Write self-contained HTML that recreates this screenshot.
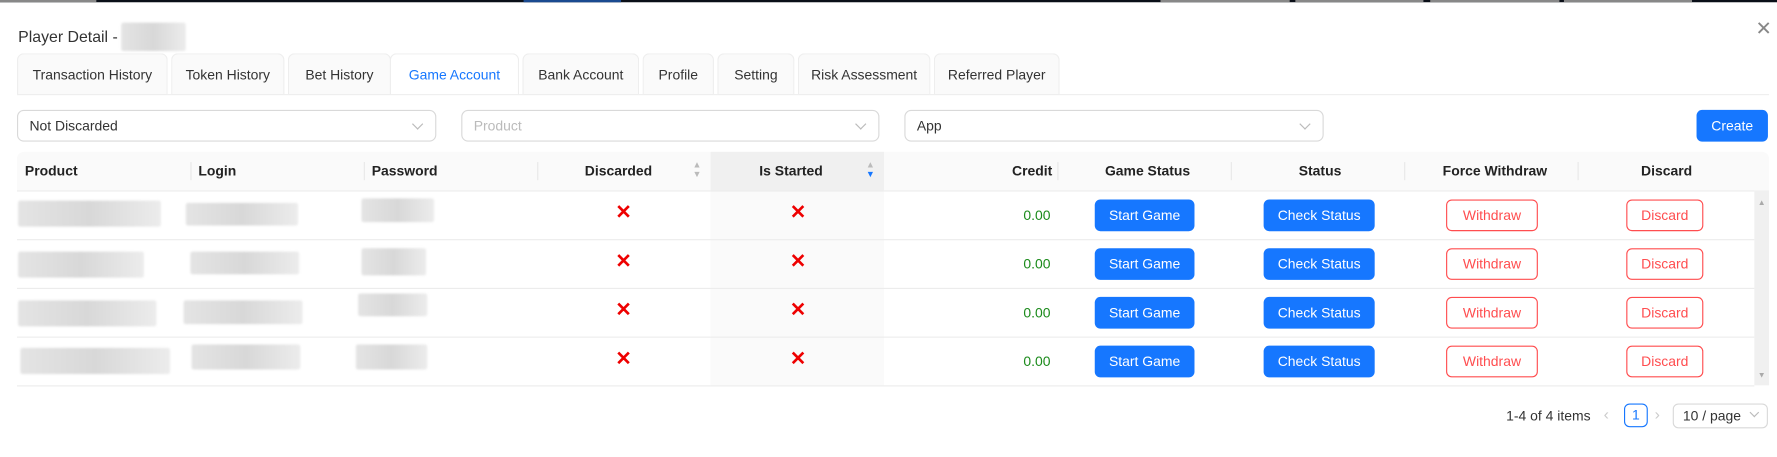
<!DOCTYPE html>
<html><head><style>
*{box-sizing:border-box;margin:0;padding:0}
html,body{width:1777px;height:457px;overflow:hidden;background:#fff}
#w{width:1568px;height:403px;position:relative;transform:scale(1.13329);transform-origin:0 0;font-family:"Liberation Sans",sans-serif;font-size:12.3px;color:#222}
.abs{position:absolute}
.tab{position:absolute;top:47px;height:36px;border:1px solid #eee;border-bottom:none;border-radius:6px 6px 0 0;background:#fafafa;line-height:36px;text-align:center;color:#333}
.tab.act{background:#fff;color:#1677ff;height:37px}
.sel{position:absolute;top:97px;height:28px;border:1px solid #d9d9d9;border-radius:6px;padding-left:10px;line-height:26px;color:#333}
.sel:after{content:"";position:absolute;right:12px;top:8px;width:6px;height:6px;border-right:1px solid #bbb;border-bottom:1px solid #bbb;transform:rotate(45deg)}
.th{position:absolute;top:134px;height:34px;line-height:34px;font-weight:bold;color:#222;font-size:12.3px}
.sep{position:absolute;top:143px;width:1px;height:16px;background:#e8e8e8}
.hl{position:absolute;left:15px;width:1533px;height:1px;background:#ececec}
.x{position:absolute;color:#e00;font-weight:bold;font-size:17px}
.cr{position:absolute;left:880px;width:47px;text-align:right;color:#1a8a1a}
.bp{position:absolute;height:28px;background:#1677ff;color:#fff;border-radius:5px;text-align:center;line-height:28px}
.bd{position:absolute;height:28px;border:1px solid #ff4d4f;color:#ff4d4f;border-radius:5px;text-align:center;line-height:26px;background:#fff}
.blur{position:absolute;background:linear-gradient(90deg,#e4e4e4,#d8d8d8,#ececec);border-radius:2px;filter:blur(1px)}
</style></head><body><div id="w">
<div class="abs" style="left:0;top:0;width:1568px;height:2px;background:#0a0f18"></div>
<div class="abs" style="left:0;top:0;width:85px;height:2px;background:#888"></div>
<div class="abs" style="left:462px;top:0;width:86px;height:2px;background:#1a4a90"></div>
<div class="abs" style="left:1024px;top:0;width:114px;height:2px;background:#888"></div>
<div class="abs" style="left:1143px;top:0;width:113px;height:2px;background:#888"></div>
<div class="abs" style="left:1262px;top:0;width:114px;height:2px;background:#888"></div>
<div class="abs" style="left:1380px;top:0;width:113px;height:2px;background:#888"></div>

<div class="abs" style="left:16px;top:24px;font-size:14px;color:#333">Player Detail -</div>
<div class="blur" style="left:107px;top:20px;width:57px;height:25px"></div>
<div class="abs" style="left:1549px;top:17px;font-size:17px;color:#888;line-height:17px">✕</div>

<div class="tab" style="left:15px;width:133px">Transaction History</div>
<div class="tab" style="left:151px;width:100px">Token History</div>
<div class="tab" style="left:254px;width:91px">Bet History</div>
<div class="tab act" style="left:344px;width:114px">Game Account</div>
<div class="tab" style="left:461px;width:103px">Bank Account</div>
<div class="tab" style="left:567px;width:63px">Profile</div>
<div class="tab" style="left:633px;width:68px">Setting</div>
<div class="tab" style="left:704px;width:117px">Risk Assessment</div>
<div class="tab" style="left:824px;width:111px">Referred Player</div>
<div class="abs" style="left:15px;top:83px;width:1546px;height:1px;background:#eee"></div>

<div class="sel" style="left:15px;width:370px">Not Discarded</div>
<div class="sel" style="left:407px;width:369px;color:#bbb">Product</div>
<div class="sel" style="left:798px;width:370px">App</div>
<div class="bp" style="left:1497px;top:97px;width:63px">Create</div>

<div class="abs" style="left:15px;top:134px;width:1546px;height:34px;background:#fafafa;border-radius:6px 6px 0 0"></div>
<div class="abs" style="left:627px;top:134px;width:153px;height:34px;background:#f0f0f0"></div>
<div class="abs" style="left:627px;top:168px;width:153px;height:172px;background:#fafafa"></div>
<div class="abs" style="left:1548px;top:168px;width:13px;height:172px;background:#f0f0f0"></div>
<div class="abs" style="left:1551px;top:176px;font-size:7px;color:#aaa">▲</div>
<div class="abs" style="left:1551px;top:328px;font-size:7px;color:#aaa">▼</div>
<div class="th" style="left:22px">Product</div>
<div class="th" style="left:175px">Login</div>
<div class="th" style="left:328px">Password</div>
<div class="th" style="left:516px">Discarded</div>
<div class="abs" style="left:611px;top:142px;font-size:8px;line-height:8px;color:#bbb">▲<br>▼</div>
<div class="th" style="left:670px">Is Started</div>
<div class="abs" style="left:764px;top:142px;font-size:8px;line-height:8px;color:#bbb">▲<br><span style="color:#1677ff">▼</span></div>
<div class="th" style="left:893px">Credit</div>
<div class="th" style="left:975px">Game Status</div>
<div class="th" style="left:1146px">Status</div>
<div class="th" style="left:1273px">Force Withdraw</div>
<div class="th" style="left:1448px">Discard</div>
<div class="sep" style="left:168px"></div><div class="sep" style="left:321px"></div><div class="sep" style="left:474px"></div><div class="sep" style="left:933px"></div><div class="sep" style="left:1086px"></div><div class="sep" style="left:1239px"></div><div class="sep" style="left:1392px"></div>
<div class="hl" style="top:168px"></div><div class="hl" style="top:211px"></div><div class="hl" style="top:254px"></div><div class="hl" style="top:297px"></div><div class="hl" style="top:340px"></div>

<div class="blur" style="left:16px;top:177px;width:126px;height:23px"></div>
<div class="blur" style="left:164px;top:179px;width:99px;height:20px"></div>
<div class="blur" style="left:319px;top:175px;width:64px;height:21px"></div>
<div class="blur" style="left:16px;top:222px;width:111px;height:23px"></div>
<div class="blur" style="left:168px;top:222px;width:96px;height:20px"></div>
<div class="blur" style="left:319px;top:219px;width:57px;height:24px"></div>
<div class="blur" style="left:16px;top:265px;width:122px;height:23px"></div>
<div class="blur" style="left:162px;top:265px;width:105px;height:21px"></div>
<div class="blur" style="left:316px;top:259px;width:61px;height:20px"></div>
<div class="blur" style="left:18px;top:307px;width:132px;height:23px"></div>
<div class="blur" style="left:169px;top:304px;width:96px;height:22px"></div>
<div class="blur" style="left:314px;top:304px;width:63px;height:22px"></div>

<div class="x" style="left:543px;top:178px">✕</div><div class="x" style="left:697px;top:178px">✕</div>
<div class="x" style="left:543px;top:221px">✕</div><div class="x" style="left:697px;top:221px">✕</div>
<div class="x" style="left:543px;top:264px">✕</div><div class="x" style="left:697px;top:264px">✕</div>
<div class="x" style="left:543px;top:307px">✕</div><div class="x" style="left:697px;top:307px">✕</div>
<div class="cr" style="top:183px">0.00</div><div class="cr" style="top:226px">0.00</div><div class="cr" style="top:269px">0.00</div><div class="cr" style="top:312px">0.00</div>

<div class="bp" style="left:966px;top:176px;width:88px">Start Game</div>
<div class="bp" style="left:966px;top:219px;width:88px">Start Game</div>
<div class="bp" style="left:966px;top:262px;width:88px">Start Game</div>
<div class="bp" style="left:966px;top:305px;width:88px">Start Game</div>
<div class="bp" style="left:1115px;top:176px;width:98px">Check Status</div>
<div class="bp" style="left:1115px;top:219px;width:98px">Check Status</div>
<div class="bp" style="left:1115px;top:262px;width:98px">Check Status</div>
<div class="bp" style="left:1115px;top:305px;width:98px">Check Status</div>
<div class="bd" style="left:1276px;top:176px;width:81px">Withdraw</div>
<div class="bd" style="left:1276px;top:219px;width:81px">Withdraw</div>
<div class="bd" style="left:1276px;top:262px;width:81px">Withdraw</div>
<div class="bd" style="left:1276px;top:305px;width:81px">Withdraw</div>
<div class="bd" style="left:1435px;top:176px;width:68px">Discard</div>
<div class="bd" style="left:1435px;top:219px;width:68px">Discard</div>
<div class="bd" style="left:1435px;top:262px;width:68px">Discard</div>
<div class="bd" style="left:1435px;top:305px;width:68px">Discard</div>

<div class="abs" style="left:1329px;top:359px;color:#333;line-height:16px">1-4 of 4 items</div>
<div class="abs" style="left:1415px;top:357px;color:#ccc;font-size:14px">‹</div>
<div class="abs" style="left:1433px;top:356px;width:21px;height:21px;border:1px solid #1677ff;border-radius:5px;color:#1677ff;text-align:center;line-height:19px">1</div>
<div class="abs" style="left:1460px;top:357px;color:#ccc;font-size:14px">›</div>
<div class="abs" style="left:1476px;top:356px;width:84px;height:22px;border:1px solid #d9d9d9;border-radius:5px;padding-left:8px;line-height:20px;color:#333">10 / page</div>
<div class="abs" style="left:1545px;top:361px;width:6px;height:6px;border-right:1px solid #bbb;border-bottom:1px solid #bbb;transform:rotate(45deg)"></div>
</div></body></html>
